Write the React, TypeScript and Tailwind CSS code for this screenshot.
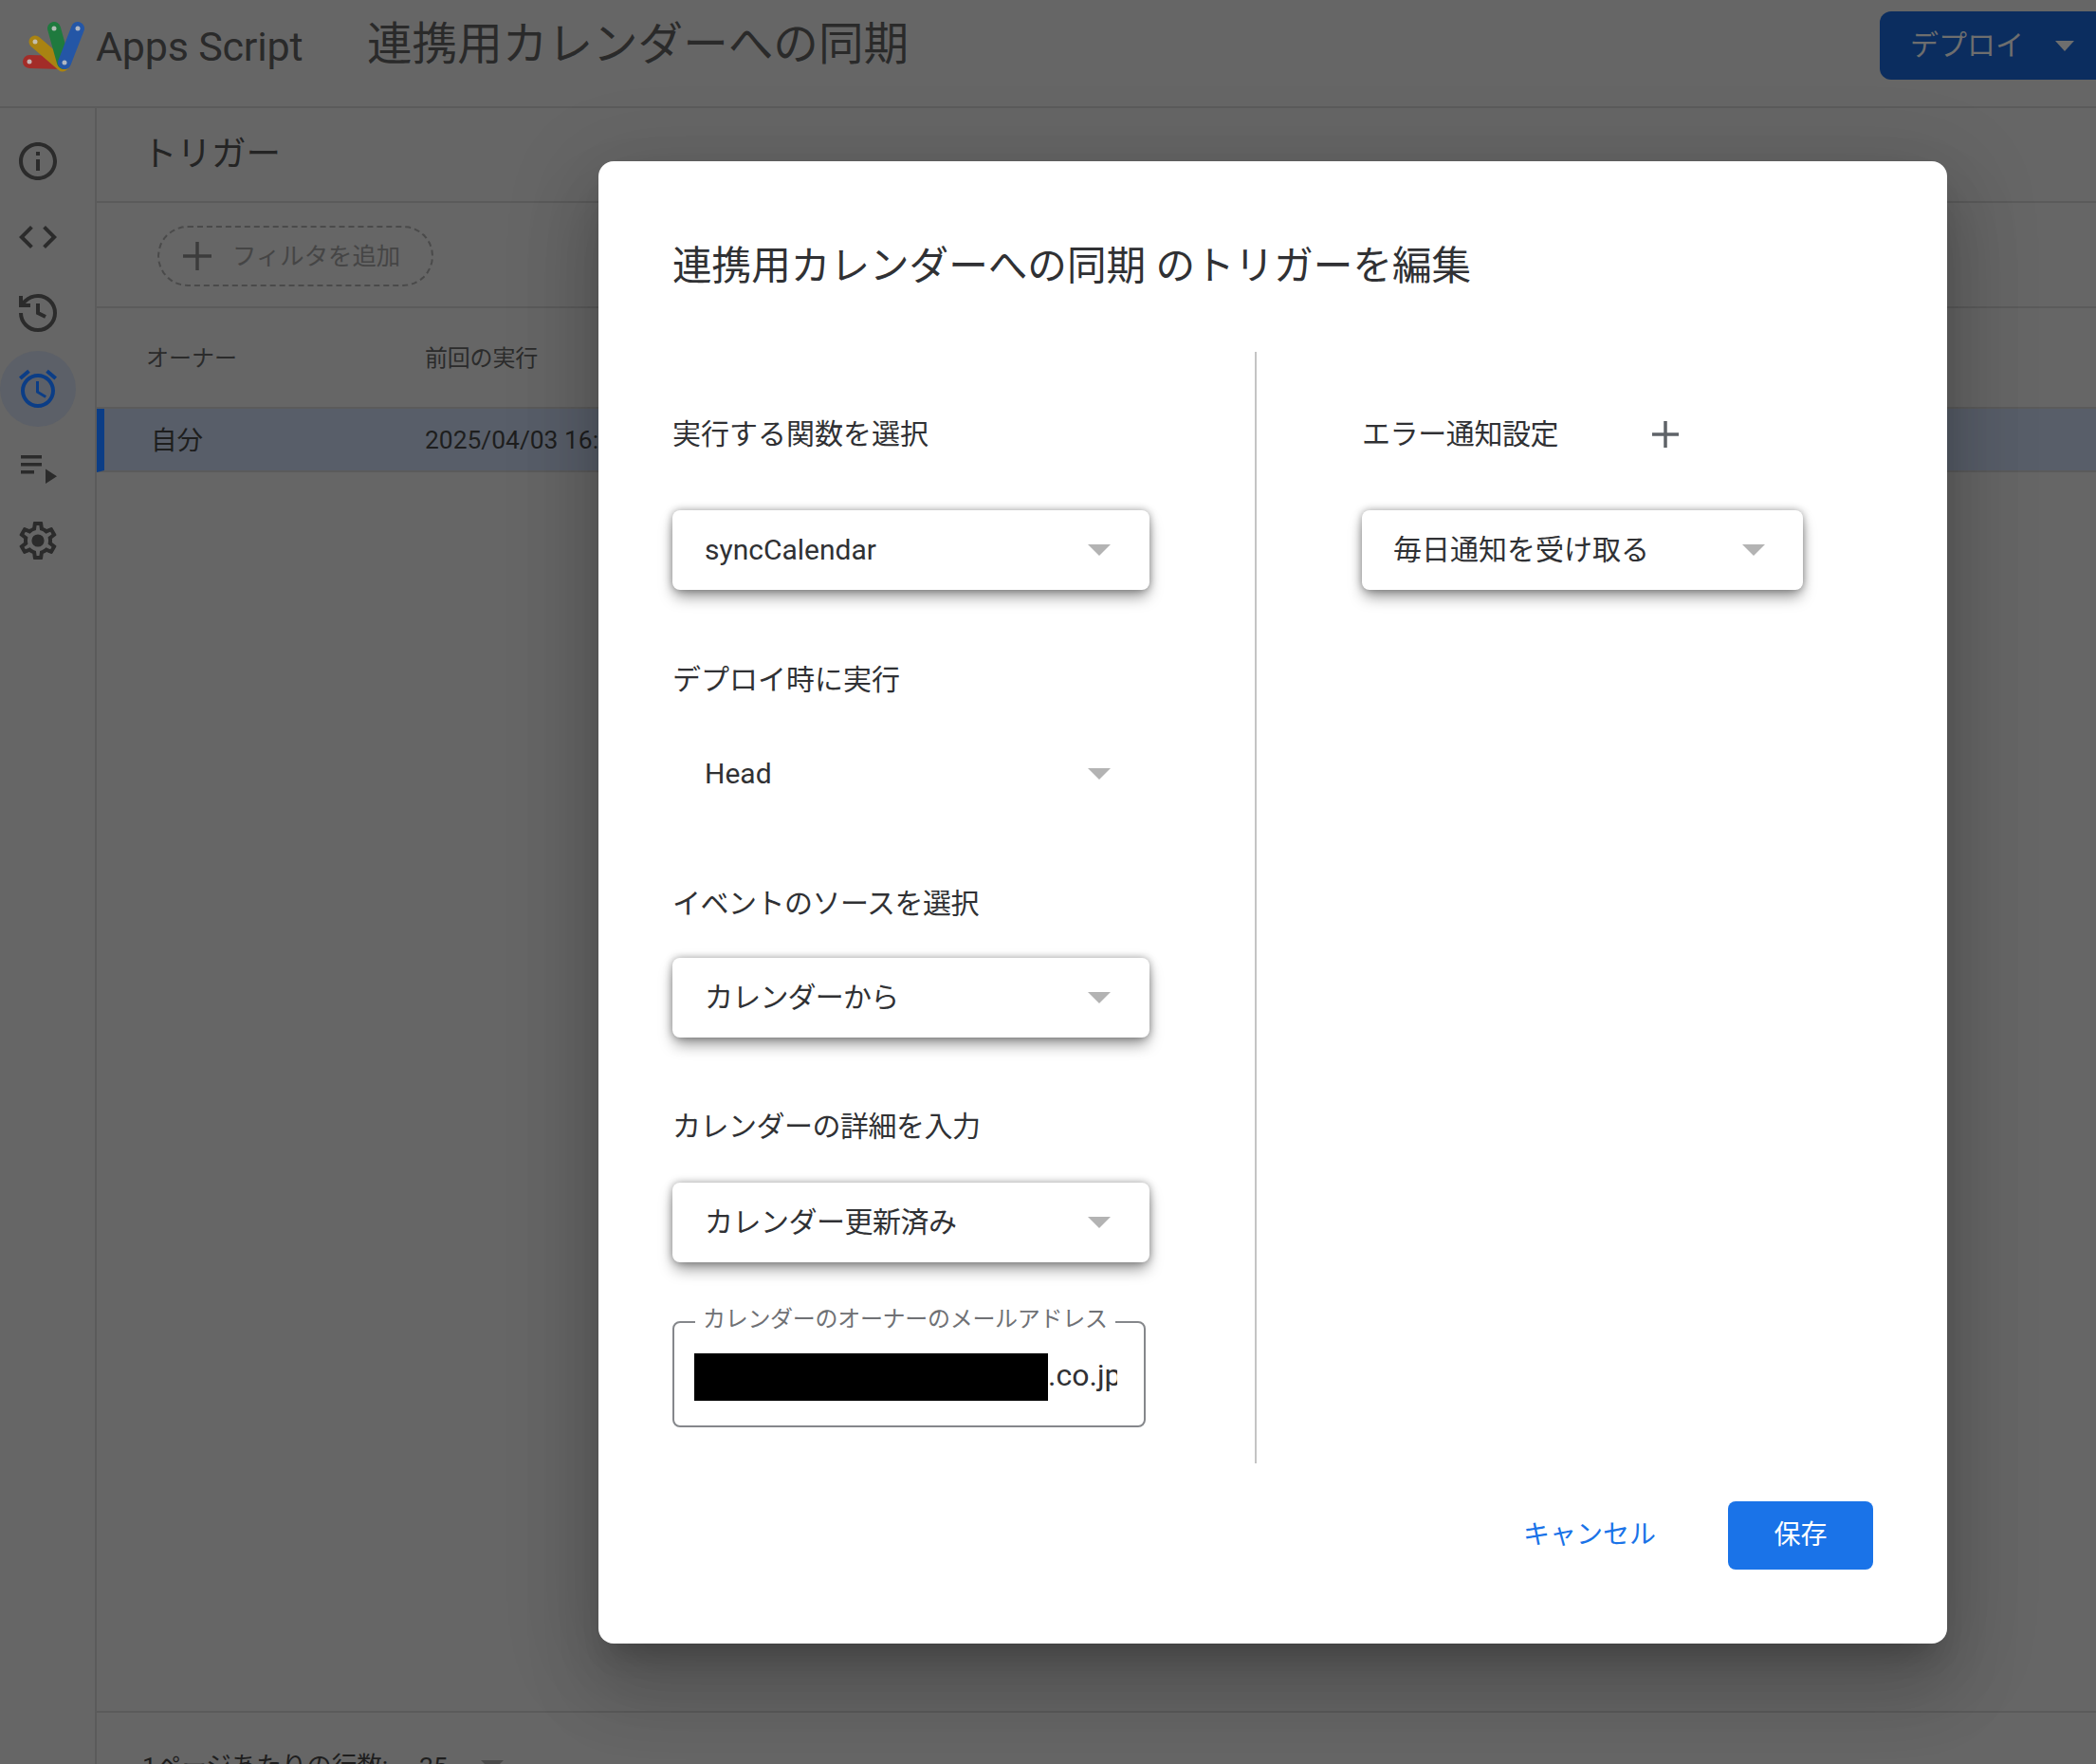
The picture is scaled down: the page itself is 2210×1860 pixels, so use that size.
import { History } from "lucide-react";

function Icon({ children, className = "fill-[#2b2b2b]" }: { children: React.ReactNode; className?: string }) {
  return (
    <svg viewBox="0 0 24 24" className={`w-12 h-12 ${className}`}>
      {children}
    </svg>
  );
}

function Logo() {
  return (
    <svg viewBox="0 0 70 60" className="w-[70px] h-[60px] shrink-0 blur-[0.6px]">
      <g strokeLinecap="round" fill="none">
        <path d="M7 45 L42 46" stroke="#a32c28" strokeWidth="14" />
        <path d="M13 24 L42 49" stroke="#a98312" strokeWidth="13" />
        <path d="M33 10 L43 46" stroke="#1f7a3e" strokeWidth="14" />
        <path d="M58 10 L44 46" stroke="#2456a6" strokeWidth="14" />
      </g>
      <g fill="#c9c9c9" opacity="0.85">
        <circle cx="7" cy="45" r="2.5" />
        <circle cx="13" cy="24" r="2.5" />
        <circle cx="33" cy="10" r="2.5" />
        <circle cx="58" cy="10" r="2.5" />
        <circle cx="44" cy="46" r="2.5" />
      </g>
    </svg>
  );
}

function Caret({ className = "fill-[#b3b3b3]" }: { className?: string }) {
  return (
    <svg viewBox="0 0 24 12" className={`w-6 h-3 shrink-0 ${className}`}>
      <polygon points="0,0 24,0 12,12" />
    </svg>
  );
}

function Select({
  text,
  raised = true,
  width = "w-[503px]",
  pr = "pr-[41px]",
  pl = "pl-[34px]",
  tracking = "",
}: {
  text: string;
  raised?: boolean;
  width?: string;
  pr?: string;
  pl?: string;
  tracking?: string;
}) {
  return (
    <div
      className={`${width} ${pr} ${pl} h-[84px] flex items-center justify-between rounded-lg text-[30px] text-[#303134] bg-white ${
        raised ? "shadow-[0_9px_16px_-2px_rgba(0,0,0,0.4),0_0_9px_rgba(0,0,0,0.36)]" : ""
      }`}
    >
      <span className={`mb-[2px] ${tracking}`}>{text}</span>
      <Caret />
    </div>
  );
}

function Label({ children, className = "" }: { children: React.ReactNode; className?: string }) {
  return <div className={`h-10 flex items-center text-[30px] leading-10 text-[#303134] ${className}`}>{children}</div>;
}

export default function App() {
  return (
    <div className="relative w-[2210px] h-[1860px] overflow-hidden bg-[#666666] flex flex-col font-['Roboto','Noto_Sans_CJK_JP',sans-serif] text-[#242424]">
      <header className="h-[114px] shrink-0 border-b-2 border-[#5b5b5b] flex items-start">
        <div className="ml-[24px] mt-[20px]">
          <Logo />
        </div>
        <div className="ml-[7px] mt-[21px] text-[43px] tracking-[-0.2px] leading-[56px] text-[#2a2a2a] w-[286px]">Apps Script</div>
        <div className="mt-[16px] text-[47.6px] leading-[62px] text-[#2a2a2a]">連携用カレンダーへの同期</div>
        <div className="ml-auto mt-[12px] w-[228px] h-[72px] rounded-l-xl bg-[#0b2d5f] flex items-center pl-[32px] pb-[2px] text-[30px] text-[#6e6e6e]">
          デプロイ
          <svg viewBox="0 0 20 11" className="ml-[33px] mt-[2px] w-5 h-[11px] fill-[#6e6e6e]">
            <polygon points="0,0 20,0 10,11" />
          </svg>
        </div>
      </header>

      <div className="flex-1 flex min-h-0">
        <nav className="w-[102px] shrink-0 border-r-2 border-[#5b5b5b] pt-4 flex flex-col">
          <div className="w-20 h-20 flex items-center justify-center">
            <Icon>
              <path d="M11 7h2v2h-2zm0 4h2v6h-2zm1-9C6.48 2 2 6.48 2 12s4.48 10 10 10 10-4.48 10-10S17.52 2 12 2zm0 18c-4.41 0-8-3.59-8-8s3.59-8 8-8 8 3.59 8 8-3.59 8-8 8z" />
            </Icon>
          </div>
          <div className="w-20 h-20 flex items-center justify-center">
            <Icon>
              <path d="M9.4 16.6L4.8 12l4.6-4.6L8 6l-6 6 6 6 1.4-1.4zm5.2 0l4.6-4.6-4.6-4.6L16 6l6 6-6 6-1.4-1.4z" />
            </Icon>
          </div>
          <div className="w-20 h-20 flex items-center justify-center">
            <History size={48} strokeWidth={2} className="text-[#2b2b2b]" strokeLinecap="butt" strokeLinejoin="miter" />
          </div>
          <div className="w-20 h-20 flex items-center justify-center rounded-full bg-[#5c6068]">
            <Icon className="fill-[#0b3d86]">
              <path d="M22 5.72l-4.6-3.86-1.29 1.53 4.6 3.86L22 5.72zM7.88 3.39L6.6 1.86 2 5.71l1.29 1.53 4.59-3.85zM12.5 8H11v6l4.75 2.85.75-1.23-4-2.37V8zM12 4c-4.97 0-9 4.03-9 9s4.03 9 9 9 9-4.03 9-9-4.03-9-9-9zm0 16c-3.87 0-7-3.13-7-7s3.13-7 7-7 7 3.13 7 7-3.13 7-7 7z" />
            </Icon>
          </div>
          <div className="w-20 h-20 flex items-center justify-center">
            <Icon>
              <path d="M3 7h11v1.7H3zM3 11h11v1.7H3zM3 15h7v1.7H3zM16 14.2v7.8l6-3.9z" />
            </Icon>
          </div>
          <div className="w-20 h-20 flex items-center justify-center">
            <Icon>
              <path
                fillRule="evenodd"
                d="M19.43 12.98c.04-.32.07-.64.07-.98 0-.34-.03-.66-.07-.98l2.11-1.65c.19-.15.24-.42.12-.64l-2-3.46c-.09-.16-.26-.25-.44-.25-.06 0-.12.01-.17.03l-2.49 1c-.52-.4-1.08-.73-1.69-.98l-.38-2.65C14.46 2.18 14.25 2 14 2h-4c-.25 0-.46.18-.49.42l-.38 2.65c-.61.25-1.17.59-1.69.98l-2.49-1c-.06-.02-.12-.03-.18-.03-.17 0-.34.09-.43.25l-2 3.46c-.13.22-.07.49.12.64l2.11 1.65c-.04.32-.07.65-.07.98 0 .33.03.66.07.98l-2.11 1.65c-.19.15-.24.42-.12.64l2 3.46c.09.16.26.25.44.25.06 0 .12-.01.17-.03l2.49-1c.52.4 1.08.73 1.69.98l.38 2.65c.03.24.24.42.49.42h4c.25 0 .46-.18.49-.42l.38-2.65c.61-.25 1.17-.59 1.69-.98l2.49 1c.06.02.12.03.18.03.17 0 .34-.09.43-.25l2-3.46c.12-.22.07-.49-.12-.64l-2.11-1.65zm-1.98-1.71c.04.31.05.52.05.73 0 .21-.02.43-.05.73l-.14 1.13.89.7 1.08.84-.7 1.21-1.27-.51-1.04-.42-.9.68c-.43.32-.84.56-1.25.73l-1.06.43-.16 1.13-.2 1.35h-1.4l-.19-1.35-.16-1.13-1.06-.43c-.43-.18-.83-.41-1.23-.71l-.91-.7-1.06.43-1.27.51-.7-1.21 1.08-.84.89-.7-.14-1.13c-.03-.31-.05-.54-.05-.74s.02-.43.05-.73l.14-1.13-.89-.7-1.08-.84.7-1.21 1.27.51 1.04.42.9-.68c.43-.32.84-.56 1.25-.73l1.06-.43.16-1.13.2-1.35h1.39l.19 1.35.16 1.13 1.06.43c.43.18.83.41 1.23.71l.91.7 1.06-.43 1.27-.51.7 1.21-1.07.85-.89.7.14 1.13z"
              />
              <circle cx="12" cy="12" r="3.3" />
            </Icon>
          </div>
        </nav>

        <main className="flex-1 min-w-0 flex flex-col">
          <div className="h-[100px] shrink-0 border-b-2 border-[#5b5b5b] pl-[48px] flex items-center text-[36.5px] text-[#242424]">トリガー</div>
          <div className="h-[111px] shrink-0 border-b-2 border-[#5b5b5b] pl-[64px] pt-[2px] flex items-center">
            <div className="w-[291px] h-16 rounded-[32px] border-2 border-dashed border-[#4a4a4a] flex items-center pl-[25px] text-[25.4px] text-[#454545]">
              <svg viewBox="0 0 30 30" className="w-[30px] h-[30px] stroke-[#3c3c3c] stroke-[3.5] mr-[22px]">
                <path d="M15 0v30M0 15h30" />
              </svg>
              <span className="mt-[2px]">フィルタを追加</span>
            </div>
          </div>
          <div className="h-[106px] shrink-0 border-b-2 border-[#5b5b5b] pt-[2px] flex items-center text-[24px] text-[#2b2b2b]">
            <div className="w-[346px] pl-[52px]">オーナー</div>
            <div className="tracking-[-0.2px]">前回の実行</div>
          </div>
          <div className="h-[67px] shrink-0 border-b-2 border-[#5b5b5b] border-l-8 border-l-[#0b3d86] bg-[#585e69] pt-[2px] flex items-center text-[27.5px] text-[#1e1e1e]">
            <div className="w-[338px] pl-[49px]">自分</div>
            <div className="text-[26.4px]">2025/04/03 16:00</div>
          </div>
          <div className="flex-1" />
          <div className="h-[56px] shrink-0 border-t-2 border-[#5b5b5b] pl-[48px] pt-[38px] flex items-start text-[26.5px] leading-[36px] text-[#1e1e1e] whitespace-nowrap">
            <span className="w-[292px]">1ページあたりの行数:</span>
            <span className="w-[65px]">25</span>
            <svg viewBox="0 0 24 12" className="w-6 h-3 mt-[12px] fill-[#4a4a4a]">
              <polygon points="0,0 24,0 12,12" />
            </svg>
          </div>
        </main>
      </div>

      <div className="absolute left-[631px] top-[170px] w-[1422px] h-[1563px] bg-white rounded-2xl pt-[78px] pl-[78px] pr-[78px] flex flex-col shadow-[0_22px_30px_-14px_rgba(0,0,0,0.2),0_48px_76px_6px_rgba(0,0,0,0.14),0_18px_92px_16px_rgba(0,0,0,0.12)]">
        <h1 className="h-[62px] pt-[4px] flex items-center text-[41.6px] text-[#303134] whitespace-nowrap">連携用カレンダーへの同期 のトリガーを編集</h1>

        <div className="mt-[61px] h-[1172px] flex">
          <div className="w-[616px] shrink-0 border-r-2 border-[#c4c4c4] pt-[67px]">
            <Label>実行する関数を選択</Label>
            <div className="mt-[60px]">
              <Select text="syncCalendar" />
            </div>
            <Label className="mt-[75px]">デプロイ時に実行</Label>
            <div className="mt-[37px]">
              <Select text="Head" raised={false} />
            </div>
            <Label className="mt-[75px] tracking-[-0.5px]">イベントのソースを選択</Label>
            <div className="mt-[37px]">
              <Select text="カレンダーから" tracking="tracking-[-0.8px]" />
            </div>
            <Label className="mt-[74px] tracking-[-0.5px]">カレンダーの詳細を入力</Label>
            <div className="mt-[39px]">
              <Select text="カレンダー更新済み" tracking="tracking-[-0.5px]" />
            </div>
            <fieldset className="mt-[53px] w-[499px] min-w-0 h-[121px] border-2 border-[#85878b] rounded-lg pl-[21px] pr-[29px]">
              <legend className="relative -top-[3px] ml-[1px] px-[8px] text-[24px] tracking-[-0.3px] leading-[20px] text-[#6f7175] whitespace-nowrap">
                カレンダーのオーナーのメールアドレス
              </legend>
              <div className="mt-[23px] w-[446px] h-[50px] flex items-center overflow-hidden whitespace-nowrap text-[32px] text-[#303134]">
                <div className="w-[373px] h-[50px] bg-black shrink-0" />
                <span className="mb-[4px]">.co.jp</span>
              </div>
            </fieldset>
          </div>

          <div className="pl-[111px] pt-[67px]">
            <div className="flex items-center">
              <Label className="w-[306px] tracking-[-0.4px]">エラー通知設定</Label>
              <svg viewBox="0 0 28 28" className="w-7 h-7 stroke-[#5f6368] stroke-[3.5]">
                <path d="M14 0v28M0 14h28" />
              </svg>
            </div>
            <div className="mt-[60px]">
              <Select text="毎日通知を受け取る" width="w-[465px]" pr="pr-[40px]" pl="pl-[33px]" />
            </div>
          </div>
        </div>

        <div className="mt-[40px] flex items-center justify-end">
          <div className="mr-[76px] text-[28px] text-[#1a73e8]">キャンセル</div>
          <div className="w-[153px] h-[72px] rounded-lg bg-[#1a73e8] flex items-center justify-center text-[28px] text-white">保存</div>
        </div>
      </div>
    </div>
  );
}
